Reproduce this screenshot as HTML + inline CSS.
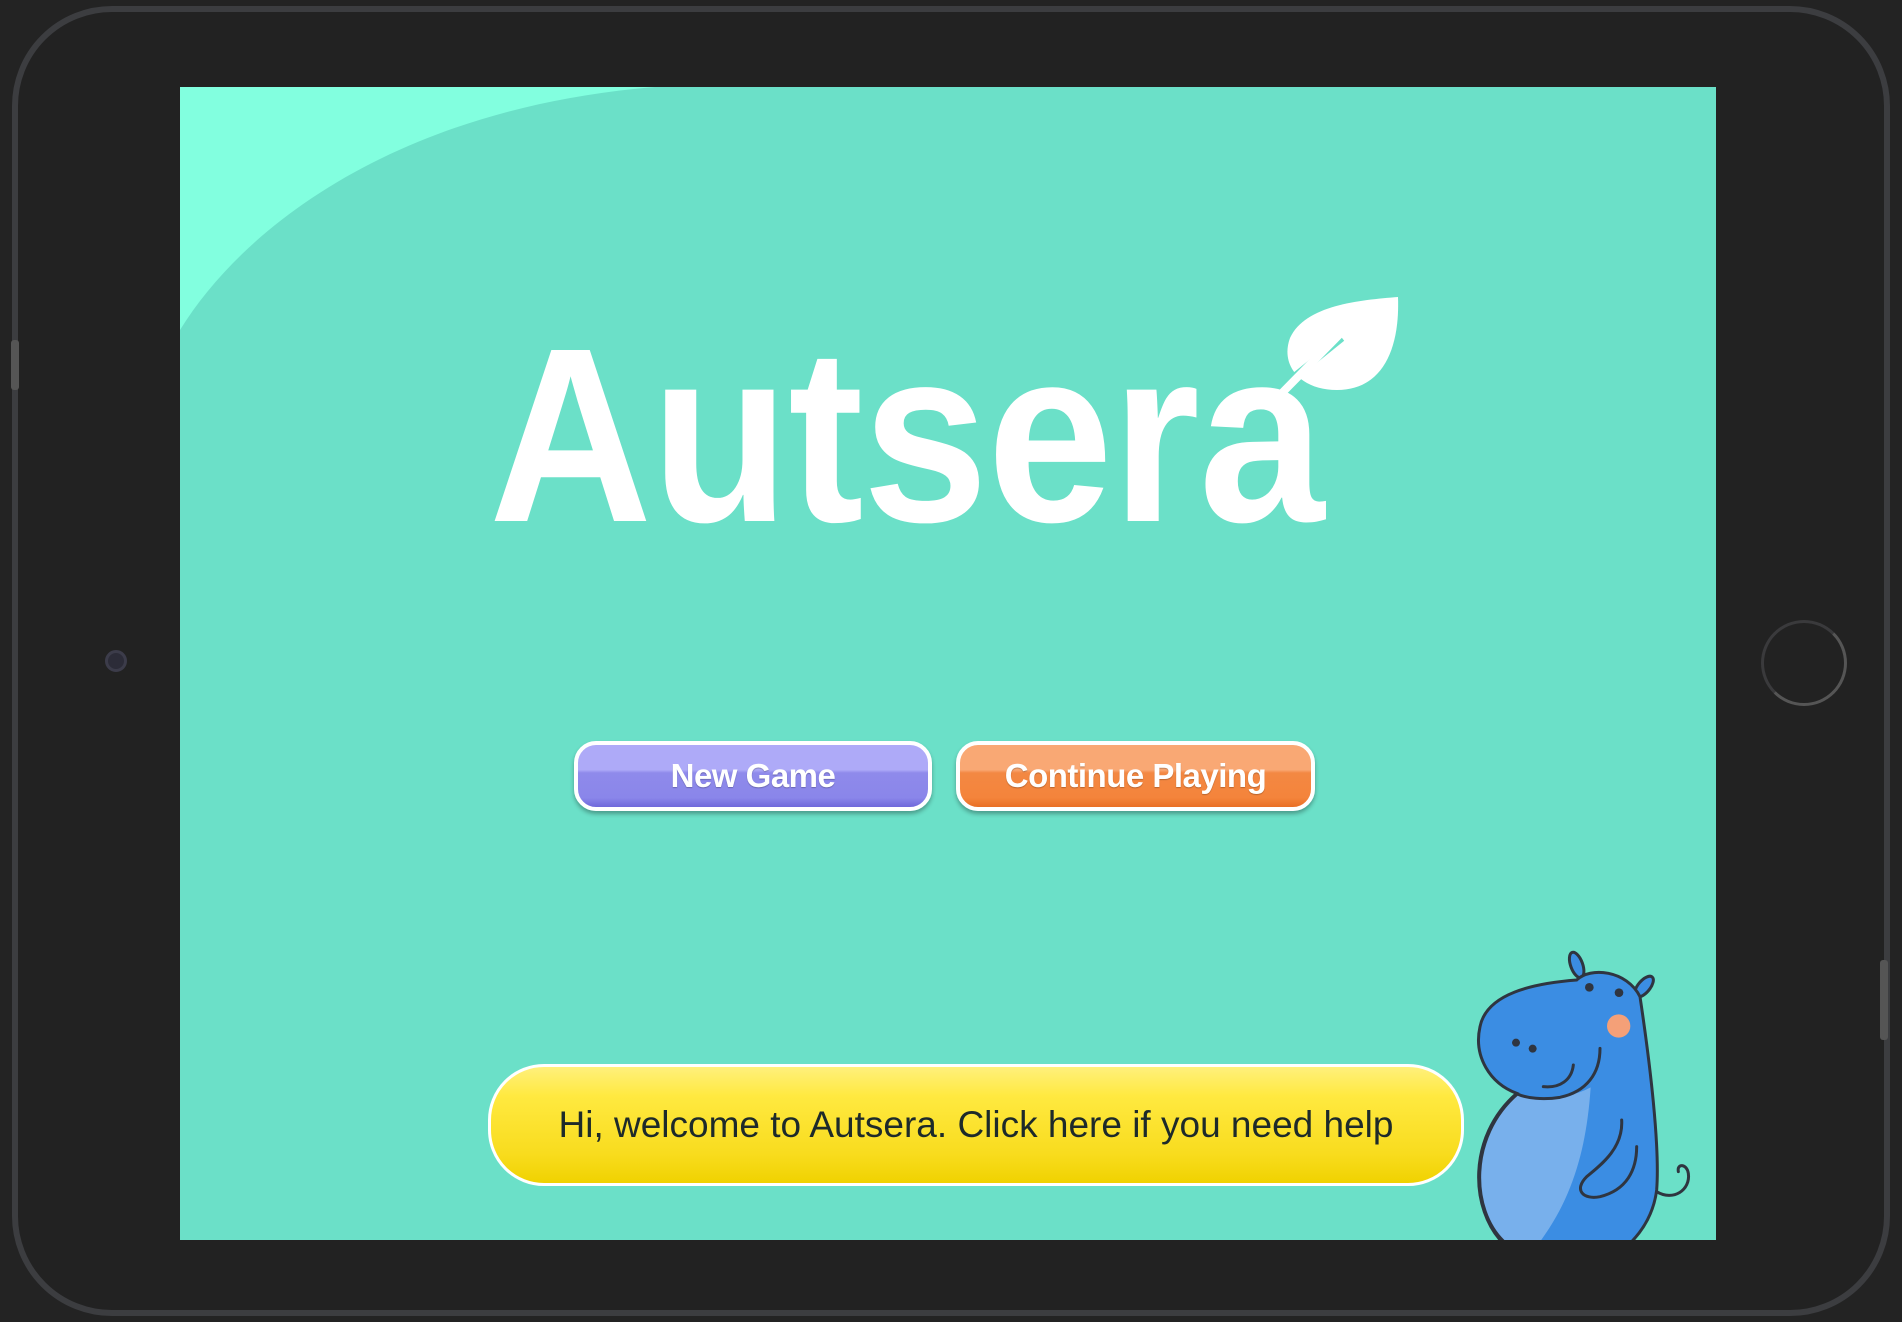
<!DOCTYPE html>
<html><head><meta charset="utf-8"><style>
html,body{margin:0;padding:0;width:1902px;height:1322px;overflow:hidden;background:#232323;font-family:"Liberation Sans",sans-serif}
.dev{position:absolute;left:12px;top:6px;width:1866px;height:1298px;border:6px solid #3c3d40;border-radius:100px;background:#222}
.scr{position:absolute;left:180px;top:87px;width:1536px;height:1153px;background:#6be0c8;overflow:hidden}
.logo{position:absolute;left:489px;top:330px;font-size:226px;font-weight:bold;color:#fff;letter-spacing:-1px;line-height:226px;font-family:"Liberation Sans",sans-serif;transform:scaleY(1.1);transform-origin:0 191px;white-space:nowrap}
.btn{position:absolute;top:741px;height:62px;border:4px solid #fff;border-radius:22px;box-shadow:0 3px 4px rgba(0,0,0,.3);color:#fff;font-weight:bold;font-size:33px;text-align:center;line-height:62px;text-shadow:0 1px 1px rgba(0,0,0,.25);box-sizing:content-box;letter-spacing:-0.5px}
.b1{left:574px;width:350px;background:linear-gradient(#aeaaf8 0,#aeaaf8 40%,#8f8aeb 45%,#8a86ea 85%,#6f68db 100%)}
.b2{left:956px;width:351px;background:linear-gradient(#f9a874 0,#f9a874 40%,#f38843 45%,#f4843b 85%,#e96f25 100%)}
.help{position:absolute;left:488px;top:1064px;width:970px;height:116px;border:3px solid #fff;border-radius:56px;background:linear-gradient(#fff07c 0,#ffe940 25%,#f8dc1e 75%,#f0d200 100%);text-align:center;line-height:116px;font-size:37px;color:#1d2a2a}
</style></head><body>
<div class="dev"></div>
<div style="position:absolute;left:11px;top:340px;width:8px;height:50px;background:#555;border-radius:3px"></div>
<div style="position:absolute;left:1880px;top:960px;width:8px;height:80px;background:#555;border-radius:3px"></div>
<div style="position:absolute;left:105px;top:650px;width:16px;height:16px;border-radius:50%;background:#2c2c38;border:3px solid #3c3c4a"></div>
<div style="position:absolute;left:1761px;top:620px;width:80px;height:80px;border-radius:50%;border:3px solid #3a3a3c;border-right-color:#555;border-bottom-color:#555"></div>
<div class="scr">
<svg style="position:absolute;left:0;top:0" width="1536" height="1153"><path d="M0 243 C70 130 230 20 475 0 L0 0Z" fill="#82ffdf"/></svg>
</div>
<div class="logo">Autsera</div>
<svg style="position:absolute;left:0;top:0" width="1902" height="1322">
<path d="M1398 297 C1400 350 1382 390 1337 390 C1300 390 1280 365 1290 338 C1305 305 1360 300 1398 297Z" fill="#fff"/>
<path d="M1290 380 L1342 338" stroke="#6be0c8" stroke-width="7"/>
<path d="M1281 394 L1340 334" stroke="#fff" stroke-width="8" stroke-linecap="round"/>
</svg>
<div class="btn b1">New Game</div>
<div class="btn b2">Continue Playing</div>
<div class="help">Hi, welcome to Autsera. Click here if you need help</div>
<svg style="position:absolute;left:1440px;top:930px" width="276" height="310" viewBox="0 0 828 930">
<g stroke="#2f3540" stroke-width="9" stroke-linecap="round">
<ellipse cx="410" cy="105" rx="18" ry="40" transform="rotate(-20 410 105)" fill="#3b8de3"/>
<ellipse cx="612" cy="170" rx="18" ry="38" transform="rotate(40 612 170)" fill="#3b8de3"/>
<path d="M410 150 C450 110 560 120 600 200 C630 400 660 650 650 780 C640 860 600 910 570 940 L190 940 C90 840 80 620 230 490 C150 460 100 380 120 290 C140 190 280 160 410 150Z" fill="#3b8de3"/>
</g>
<path d="M232 495 C85 620 92 840 192 935 L300 935 C400 800 440 650 452 472 C380 510 290 512 232 495Z" fill="#78b0ec"/>
<g stroke="#2f3540" stroke-width="9" fill="none" stroke-linecap="round">
<path d="M232 492 C85 620 92 840 192 935"/>
<path d="M480 355 C480 430 440 485 360 502 C310 510 260 505 232 492"/>
<path d="M310 470 C360 475 395 450 400 405"/>
<path d="M545 570 C550 650 490 700 440 740 C400 780 430 810 480 800 C560 780 590 720 590 650"/>
<path d="M650 785 C700 815 752 780 745 730 C740 700 710 700 715 725"/>
</g>
<g fill="#2f3540"><circle cx="448" cy="172" r="13"/><circle cx="537" cy="188" r="13"/><circle cx="228" cy="338" r="12"/><circle cx="278" cy="356" r="12"/></g>
<circle cx="536" cy="288" r="35" fill="#f4a078"/>
</svg>
</body></html>
